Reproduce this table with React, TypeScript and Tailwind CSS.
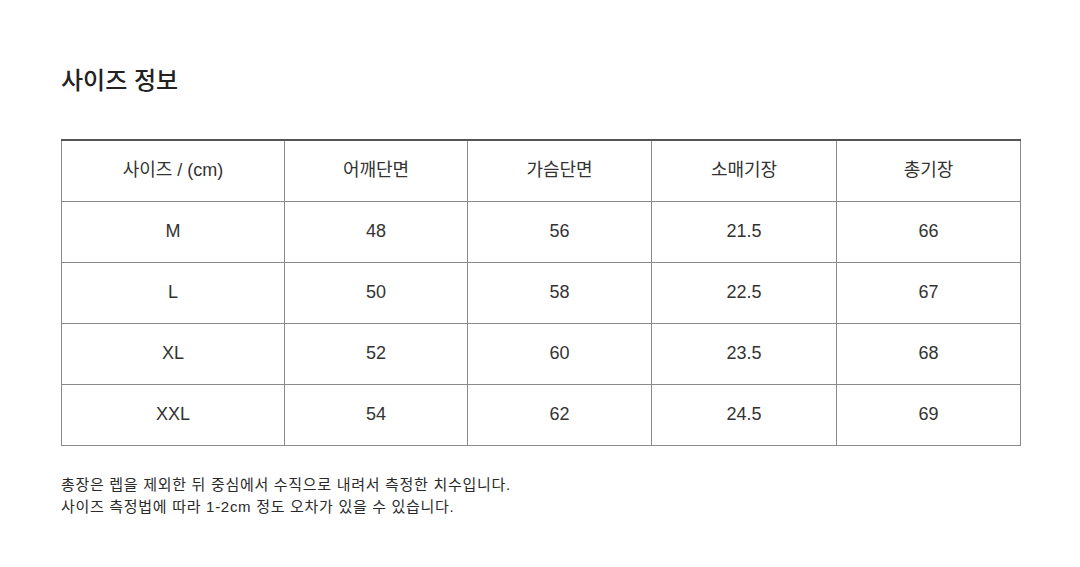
import React from "react";

const headers = ["사이즈 / (cm)", "어깨단면", "가슴단면", "소매기장", "총기장"];
const rows = [
  ["M", "48", "56", "21.5", "66"],
  ["L", "50", "58", "22.5", "67"],
  ["XL", "52", "60", "23.5", "68"],
  ["XXL", "54", "62", "24.5", "69"],
];
const widths = ["w-[223px]", "w-[183px]", "w-[184px]", "w-[185px]", "w-[184px]"];

export default function App() {
  return (
    <div
      className="w-[1080px] h-[567px] bg-white text-[#333]"
      style={{ fontFamily: '"Liberation Sans", "Noto Sans CJK KR", sans-serif' }}
    >
      <div className="pl-[61px] pt-[65px]">
        <h1 className="text-[24px] leading-[32px] font-medium text-[#222]">사이즈 정보</h1>
        <table className="mt-[42px] border-collapse text-[18px] text-[#333]">
          <thead>
            <tr className="h-[61px]">
              {headers.map((h, i) => (
                <th
                  key={h}
                  className={`${widths[i]} font-normal border border-[#8a8a8a] border-t-2 border-t-[#555] text-center`}
                >
                  {h}
                </th>
              ))}
            </tr>
          </thead>
          <tbody>
            {rows.map((r) => (
              <tr key={r[0]} className="h-[61px]">
                {r.map((c, i) => (
                  <td key={i} className={`${widths[i]} border border-[#8a8a8a] text-center`}>
                    {c}
                  </td>
                ))}
              </tr>
            ))}
          </tbody>
        </table>
        <div className="mt-[28px] text-[15px] leading-[22px] tracking-[0.7px] text-[#2a2a2a]">
          <p>총장은 렙을 제외한 뒤 중심에서 수직으로 내려서 측정한 치수입니다.</p>
          <p>사이즈 측정법에 따라 1-2cm 정도 오차가 있을 수 있습니다.</p>
        </div>
      </div>
    </div>
  );
}
